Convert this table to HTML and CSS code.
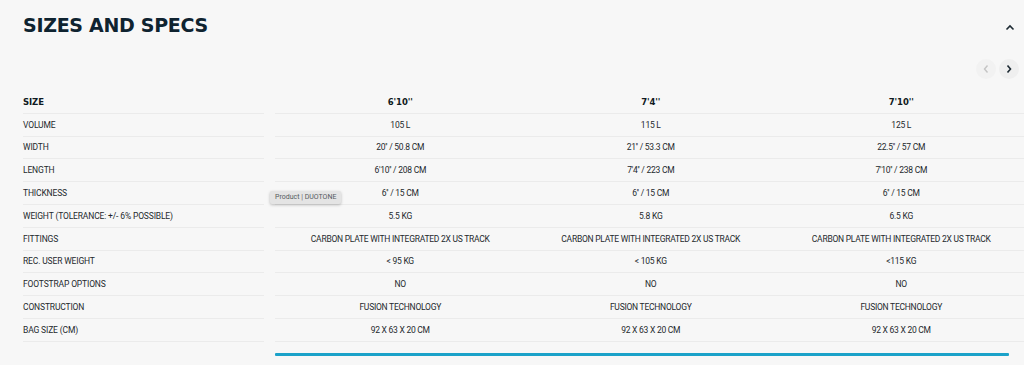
FILE: index.html
```html
<!DOCTYPE html>
<html>
<head>
<meta charset="utf-8">
<link rel="stylesheet" href="styles.css">
</head>
<body>
<section class="specs">
  <header class="head">
    <h2 class="title">SIZES AND SPECS</h2>
    <button class="collapse" aria-label="Collapse">
      <svg width="10" height="7" viewBox="0 0 10 7"><path d="M1.5 5.5 L5 2 L8.5 5.5" fill="none" stroke="#1d2a33" stroke-width="1.6"/></svg>
    </button>
  </header>
  <div class="nav">
    <button class="navbtn disabled" aria-label="Previous">
      <svg width="8" height="10" viewBox="0 0 8 10"><path d="M5.5 1.5 L2.5 5 L5.5 8.5" fill="none" stroke="#c4c4c4" stroke-width="1.4"/></svg>
    </button>
    <button class="navbtn" aria-label="Next">
      <svg width="8" height="10" viewBox="0 0 8 10"><path d="M2.5 1.5 L5.5 5 L2.5 8.5" fill="none" stroke="#1d2a33" stroke-width="1.6"/></svg>
    </button>
  </div>
  <div class="table">
    <div class="row head-row">
      <div class="label">SIZE</div>
      <div class="cells"><div class="cell">6'10''</div><div class="cell">7'4''</div><div class="cell">7'10''</div></div>
    </div>
    <div class="row">
      <div class="label">VOLUME</div>
      <div class="cells"><div class="cell">105 L</div><div class="cell">115 L</div><div class="cell">125 L</div></div>
    </div>
    <div class="row">
      <div class="label">WIDTH</div>
      <div class="cells"><div class="cell">20'' / 50.8 CM</div><div class="cell">21'' / 53.3 CM</div><div class="cell">22.5'' / 57 CM</div></div>
    </div>
    <div class="row">
      <div class="label">LENGTH</div>
      <div class="cells"><div class="cell">6'10'' / 208 CM</div><div class="cell">7'4'' / 223 CM</div><div class="cell">7'10'' / 238 CM</div></div>
    </div>
    <div class="row">
      <div class="label">THICKNESS</div>
      <div class="cells"><div class="cell">6'' / 15 CM</div><div class="cell">6'' / 15 CM</div><div class="cell">6'' / 15 CM</div></div>
      <div class="tooltip">Product | DUOTONE</div>
    </div>
    <div class="row">
      <div class="label">WEIGHT (TOLERANCE: +/- 6% POSSIBLE)</div>
      <div class="cells"><div class="cell">5.5 KG</div><div class="cell">5.8 KG</div><div class="cell">6.5 KG</div></div>
    </div>
    <div class="row">
      <div class="label">FITTINGS</div>
      <div class="cells"><div class="cell">CARBON PLATE WITH INTEGRATED 2X US TRACK</div><div class="cell">CARBON PLATE WITH INTEGRATED 2X US TRACK</div><div class="cell">CARBON PLATE WITH INTEGRATED 2X US TRACK</div></div>
    </div>
    <div class="row">
      <div class="label">REC. USER WEIGHT</div>
      <div class="cells"><div class="cell">&lt; 95 KG</div><div class="cell">&lt; 105 KG</div><div class="cell">&lt;115 KG</div></div>
    </div>
    <div class="row">
      <div class="label">FOOTSTRAP OPTIONS</div>
      <div class="cells"><div class="cell">NO</div><div class="cell">NO</div><div class="cell">NO</div></div>
    </div>
    <div class="row">
      <div class="label">CONSTRUCTION</div>
      <div class="cells"><div class="cell">FUSION TECHNOLOGY</div><div class="cell">FUSION TECHNOLOGY</div><div class="cell">FUSION TECHNOLOGY</div></div>
    </div>
    <div class="row">
      <div class="label">BAG SIZE (CM)</div>
      <div class="cells"><div class="cell">92 X 63 X 20 CM</div><div class="cell">92 X 63 X 20 CM</div><div class="cell">92 X 63 X 20 CM</div></div>
    </div>
  </div>
  <div class="scrollbar"><div class="thumb"></div></div>
</section>
</body>
</html>
```

FILE: styles.css
```css
html, body {
  margin: 0;
  padding: 0;
  background: #f7f7f7;
  overflow: hidden;
}
body {
  font-family: Roboto, "Liberation Sans", sans-serif;
  color: #2b2f33;
  width: 1024px;
  height: 365px;
}
.specs {
  padding: 0 0 0 23px;
}
.head {
  display: flex;
  align-items: center;
  justify-content: space-between;
  height: 50px;
  padding-right: 9px;
}
.title {
  margin: 0;
  font-family: "DejaVu Sans", sans-serif;
  font-weight: bold;
  font-size: 19px;
  letter-spacing: -0.3px;
  color: #0f2330;
  line-height: 1;
  padding-top: 1px;
}
.collapse {
  border: 0;
  background: transparent;
  padding: 0;
  width: 10px;
  height: 7px;
  display: flex;
  margin-top: 4px;
}
.nav {
  display: flex;
  justify-content: flex-end;
  gap: 3px;
  padding-right: 5px;
  margin-top: 9px;
  height: 20px;
}
.navbtn {
  width: 20px;
  height: 20px;
  border-radius: 50%;
  border: 0;
  padding: 0;
  background: #efefef;
  display: flex;
  align-items: center;
  justify-content: center;
}
.navbtn.disabled {
  background: #f2f2f2;
}
.table {
  margin-top: 12px;
  display: flex;
  flex-direction: column;
}
.row {
  display: flex;
  height: 22.8px;
  position: relative;
}
.label {
  width: 241px;
  flex: none;
  border-bottom: 1px solid #ebebeb;
  display: flex;
  align-items: center;
  font-size: 8.5px;
  letter-spacing: -0.15px;
  color: #24292d;
}
.cells {
  margin-left: 11px;
  flex: none;
  display: flex;
  width: 760px;
  border-bottom: 1px solid #ebebeb;
}
.cell {
  width: 250.5px;
  flex: none;
  display: flex;
  align-items: center;
  justify-content: center;
  font-size: 8.5px;
  letter-spacing: -0.25px;
  color: #24292d;
}
.head-row .label,
.head-row .cell {
  font-family: "DejaVu Sans", sans-serif;
  font-weight: bold;
  font-size: 8.5px;
  letter-spacing: -0.1px;
  color: #0f1a22;
}
.tooltip {
  position: absolute;
  left: 247px;
  top: 9px;
  height: 13px;
  padding: 0 5px;
  background: #e4e4e4;
  color: #555a5e;
  font-size: 7px;
  line-height: 13px;
  border-radius: 2px;
  box-shadow: 0 1px 3px rgba(0,0,0,0.25);
  white-space: nowrap;
}
.scrollbar {
  margin-left: 252px;
  margin-top: 11px;
  width: 734px;
  height: 3px;
}
.thumb {
  height: 3px;
  background: #1ba2c9;
  border-radius: 1px;
}
```
